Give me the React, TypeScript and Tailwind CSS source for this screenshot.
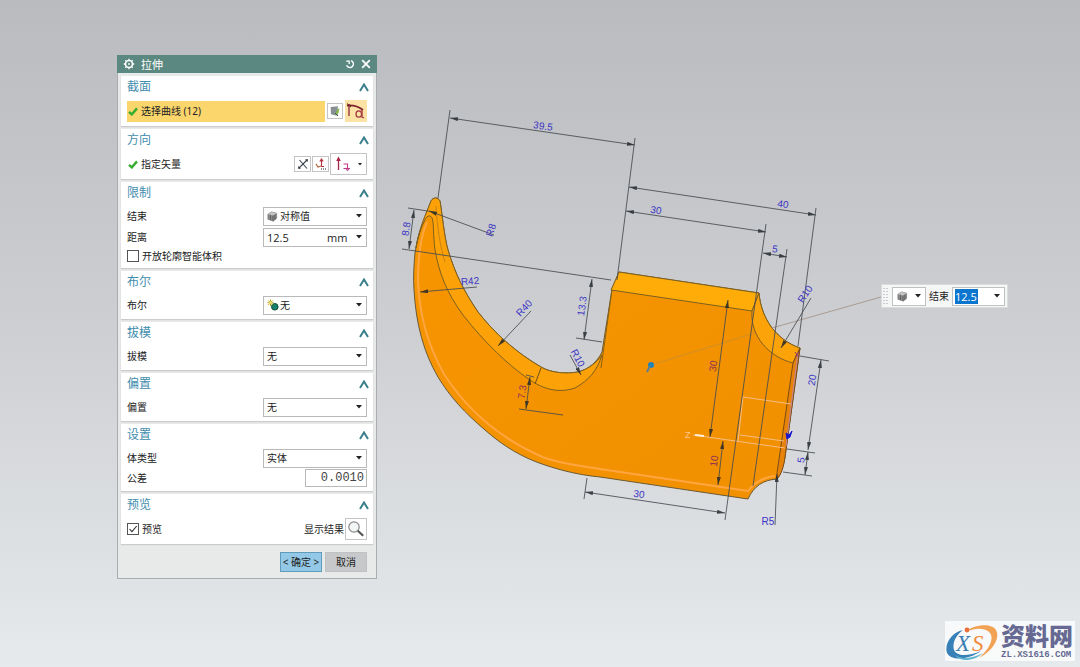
import { useId, useState } from "react";
import type { ReactNode } from "react";

type Point = [number, number];

interface Dimension {
  from: Point;
  to: Point;
  both?: boolean;
}

interface Label {
  text: string;
  at: Point;
  angle: number;
  tone?: string;
}

const dimensions: Dimension[] = [
  { from: [450, 118], to: [635, 145], both: true },
  { from: [629, 187], to: [816, 215], both: true },
  { from: [626, 211], to: [766, 232], both: true },
  { from: [763, 253], to: [787, 257], both: true },
  { from: [414, 210], to: [409, 249], both: true },
  { from: [592, 279], to: [584, 340], both: true },
  { from: [530, 377], to: [526, 409], both: true },
  { from: [728, 300], to: [710, 437], both: true },
  { from: [723, 441], to: [718, 485], both: true },
  { from: [821, 360], to: [808, 450], both: true },
  { from: [808, 452], to: [805, 475], both: true },
  { from: [585, 492], to: [725, 513], both: true },
  { from: [494, 235], to: [429, 211] },
  { from: [477, 287], to: [420, 292] },
  { from: [531, 311], to: [498, 346] },
  { from: [570, 355], to: [581, 375] },
  { from: [811, 298], to: [781, 348] },
  { from: [775, 525], to: [777, 474] },
];

const extensions: [Point, Point][] = [
  [[450, 110], [438, 198]],
  [[635, 138], [617, 280]],
  [[816, 208], [798, 346]],
  [[766, 224], [725, 520]],
  [[787, 249], [753, 486]],
  [[408, 208], [434, 212]],
  [[402, 249], [611, 280]],
  [[576, 338], [602, 342]],
  [[526, 375], [534, 377]],
  [[519, 409], [563, 415]],
  [[800, 356], [829, 361]],
  [[787, 449], [815, 453]],
  [[783, 472], [812, 476]],
  [[587, 478], [584, 499]],
];

const labels: Label[] = [
  { text: "39.5", at: [543, 126], angle: 8 },
  { text: "40", at: [783, 204], angle: 8 },
  { text: "30", at: [656, 210], angle: 8 },
  { text: "5", at: [775, 249], angle: 8 },
  { text: "R10", at: [805, 294], angle: -56 },
  { text: "8.8", at: [406, 229], angle: -82 },
  { text: "R8", at: [491, 230], angle: -72 },
  { text: "R42", at: [470, 281], angle: -5 },
  { text: "R40", at: [524, 308], angle: -46 },
  { text: "13.3", at: [582, 306], angle: -82 },
  { text: "R10", at: [578, 358], angle: 62 },
  { text: "7.3", at: [522, 392], angle: -82, tone: "fill-[#8a2f5a]" },
  { text: "30", at: [713, 366], angle: -82, tone: "fill-[#8a2f5a]" },
  { text: "10", at: [714, 461], angle: -82, tone: "fill-[#8a2f5a]" },
  { text: "20", at: [812, 380], angle: -82 },
  { text: "5", at: [801, 460], angle: -82 },
  { text: "30", at: [639, 494], angle: 8 },
  { text: "R5", at: [768, 521], angle: 0 },
];

function ModelView() {
  return (
    <svg
      viewBox="0 0 1080 667"
      preserveAspectRatio="xMidYMid slice"
      className="absolute inset-0 h-full w-full"
      role="img"
      aria-label="拉伸"
    >
      <defs>
        <marker id="arrow" viewBox="0 0 8 4" refX="8" refY="2" markerWidth="8" markerHeight="4" markerUnits="userSpaceOnUse" orient="auto-start-reverse">
          <path d="M0 0L8 2L0 4Z" fill="#20262b" />
        </marker>
        <linearGradient id="face" x1="0" y1="0" x2="1" y2="1">
          <stop offset="0" stopColor="#f79500" />
          <stop offset="1" stopColor="#f19000" />
        </linearGradient>
      </defs>

      <g strokeLinejoin="round">
        <path
          d="M431 201C433 197 438 197 440 201C442 212 444 236 448 250C455 273 463 290 478 312C495 334 517 353 541 367C551 373 566 374 578 372C589 369 597 362 602 352L612 289L619 272L759 293C761 318 776 340 800 348L785 457C783 468 780 476 777 479C763 480 754 486 748 499L600 477C580 475 563 471 545 465C523 458 503 446 485 430C465 413 450 397 438 377C424 353 416 325 414 290C413 278 414 264 415 253C418 232 425 217 431 201Z"
          fill="url(#face)"
          stroke="#6b5a36"
          strokeWidth="1"
        />
        <path
          d="M431 201C433 197 438 197 440 201C442 212 444 236 448 250C455 273 463 290 478 312C495 334 517 353 541 367C551 373 566 374 578 372C589 369 597 362 602 355C597 371 589 380 575 388C557 394 542 388 530 380C508 365 485 343 463 315C446 292 439 272 435 250C433 235 434 222 432 218C430 214 426 216 424 222C421 228 418 236 416 248C419 228 426 214 431 201Z"
          fill="#fca208"
          stroke="#7d6020"
          strokeWidth="1"
        />
        <path d="M619 272L759 293L752 311L611 290Z" fill="#ffab08" stroke="#7d6020" strokeWidth="1" />
        <path d="M759 293C761 318 776 340 800 348L793 363C769 357 750 336 752 311Z" fill="#fca30a" stroke="#7d6020" strokeWidth="1" />
        <path d="M800 348L793 363L777 473L777 479C781 475 784 466 785 457Z" fill="#e8830a" stroke="#7a4c16" strokeWidth="1" />
        <path d="M541 368L535 384" stroke="#6b5115" strokeWidth="1" fill="none" />
        <path d="M612 290L601 368" stroke="#8a6415" strokeWidth="1" fill="none" />
        <path
          d="M427 222C420 238 418 260 418 280C419 312 428 346 444 374C467 410 500 439 545 458C566 465 584 466 600 469L748 491C755 482 764 477 775 476"
          fill="none"
          stroke="#ffa640"
          strokeWidth="2"
        />
        <path d="M436 206C437 225 440 246 445 262" fill="none" stroke="#c98410" strokeWidth="1" />
      </g>

      <g fill="none" stroke="#f7bd83" strokeWidth="1">
        <path d="M791 404L743 397L738 441" />
        <path d="M740 435L784 441M693 435L785 448" />
        <path d="M798 352L786 446" stroke="#c58498" />
        <path d="M695 435L704 436" stroke="#fff0dc" strokeWidth="2" />
      </g>
      <text x="685" y="438" className="fill-[#ffc795] font-['Liberation_Sans'] text-[9px]">Z</text>

      <path d="M651 365L755 333" stroke="#b99042" strokeWidth="1" opacity="0.6" />
      <path d="M772 328L881 297" stroke="#a99c92" strokeWidth="1" />

      <g stroke="#464c51" strokeWidth="1" fill="none" opacity="0.85">
        {extensions.map(([a, b], i) => (
          <line key={i} x1={a[0]} y1={a[1]} x2={b[0]} y2={b[1]} />
        ))}
        {dimensions.map((d, i) => (
          <line
            key={i}
            x1={d.from[0]}
            y1={d.from[1]}
            x2={d.to[0]}
            y2={d.to[1]}
            markerEnd="url(#arrow)"
            markerStart={d.both ? "url(#arrow)" : undefined}
          />
        ))}
      </g>

      {labels.map((l, i) => (
        <text
          key={i}
          textAnchor="middle"
          dominantBaseline="central"
          transform={`translate(${l.at[0]} ${l.at[1]}) rotate(${l.angle})`}
          className={`font-['Liberation_Sans_Narrow','Liberation_Sans',sans-serif] text-[10px] ${l.tone ?? "fill-[#3b35c4]"}`}
        >
          {l.text}
        </text>
      ))}

      <circle cx="651" cy="365" r="3" fill="#1d83b8" />
      <path d="M650 366L647 372" stroke="#5a8193" strokeWidth="2" />
      <path d="M786 433L789 435L792 431L790 437L787 439Z" fill="#1818d0" stroke="#1818d0" strokeWidth="1" />
      <path d="M795 352L799 357M799 352L795 357" stroke="#8d3a5c" strokeWidth="1" />
    </svg>
  );
}

function Caret() {
  return (
    <svg viewBox="0 0 6 4" className="pointer-events-none h-1 w-1.5" aria-hidden="true">
      <path d="M0 0H6L3 3.6Z" fill="#222" />
    </svg>
  );
}

function CubeIcon() {
  return (
    <svg viewBox="0 0 12 12" className="h-[11px] w-[11px]" aria-hidden="true">
      <path d="M1 3.5L5 1L10.5 2.5V8L7 11L1 9Z" fill="#8c8c8c" stroke="#777" strokeWidth="0.8" />
      <path d="M1 3.5L6.5 5L10.5 2.5L5 1Z" fill="#c4c4c4" />
      <path d="M6.5 5V11M3.7 4.2V9.9M8.6 4V9.5" stroke="#555" strokeWidth="0.9" />
    </svg>
  );
}

function BooleanIcon() {
  return (
    <svg viewBox="0 0 12 12" className="h-3 w-3" aria-hidden="true">
      <circle cx="7.8" cy="7.8" r="3.3" fill="#16806a" stroke="#14503f" />
      <path d="M3.5 0.5V7M0.5 3.7H6.8M1.3 1.5L5.7 6M5.7 1.5L1.3 6" stroke="#b5a51e" strokeWidth="1" />
      <circle cx="3.5" cy="3.7" r="1.3" fill="#f4e36e" />
    </svg>
  );
}

function CheckMark() {
  return (
    <svg viewBox="0 0 10 9" className="h-[9px] w-[10px] shrink-0" aria-hidden="true">
      <path d="M1 4.8L3.8 7.4L9 1.4" fill="none" stroke="#35ad2e" strokeWidth="2.4" />
    </svg>
  );
}

function Section({ title, children }: { title: string; children: ReactNode }) {
  const [open, setOpen] = useState(true);
  return (
    <section className="bg-white pr-1.5 pb-1 pl-1.5 shadow-[0_1px_1px_#c9cbcc]">
      <h2>
        <button
          type="button"
          aria-expanded={open}
          onClick={() => setOpen(!open)}
          className="flex h-[22px] w-full items-center justify-between text-[12px] leading-none text-[#3f8dad]"
        >
          {title}
          <svg viewBox="0 0 10 9" className={open ? "-mr-0.5 h-[9px] w-[10px]" : "-mr-0.5 h-[9px] w-[10px] rotate-180"} aria-hidden="true">
            <path d="M1 8L5 1.5L9 8" fill="none" stroke="#3b7f8c" strokeWidth="2" />
          </svg>
        </button>
      </h2>
      {open && <div className="flex flex-col gap-px pt-0.5">{children}</div>}
    </section>
  );
}

function Choice({ label, options, icon }: { label: string; options: string[]; icon?: ReactNode }) {
  const id = useId();
  return (
    <div className="flex h-5 items-center justify-between">
      <label htmlFor={id}>{label}</label>
      <div className="relative flex h-[19px] w-[104px] items-center border border-[#b9b9b9] bg-white">
        {icon && <span className="pointer-events-none absolute left-[3px]">{icon}</span>}
        <select
          id={id}
          className={
            icon
              ? "h-full w-full appearance-none bg-transparent pl-4 outline-none"
              : "h-full w-full appearance-none bg-transparent pl-[3px] outline-none"
          }
        >
          {options.map((o) => (
            <option key={o}>{o}</option>
          ))}
        </select>
        <span className="pointer-events-none absolute right-1 flex">
          <Caret />
        </span>
      </div>
    </div>
  );
}

function CheckBox({ label, initial }: { label: string; initial: boolean }) {
  const [checked, setChecked] = useState(initial);
  return (
    <label className="flex items-center gap-[3px]">
      <span className="relative flex h-3 w-3">
        <input
          type="checkbox"
          checked={checked}
          onChange={(e) => setChecked(e.target.checked)}
          className="h-3 w-3 appearance-none border border-[#555] bg-white"
        />
        {checked && (
          <svg viewBox="0 0 12 12" className="pointer-events-none absolute inset-0 h-3 w-3" aria-hidden="true">
            <path d="M2.5 6L5 8.7L9.7 3" fill="none" stroke="#333" strokeWidth="1.1" />
          </svg>
        )}
      </span>
      {label}
    </label>
  );
}

function ExtrudeDialog() {
  return (
    <form
      onSubmit={(e) => e.preventDefault()}
      className="absolute top-[55px] left-[117px] w-[260px] border border-[#a9adb0] bg-[#e8e9e9] text-[10px] leading-none text-[#222]"
    >
      <header className="-mx-px -mt-px flex h-[18px] items-center bg-[#5b8981] px-1.5 text-white">
        <svg viewBox="0 0 12 12" className="h-3 w-3" aria-hidden="true">
          <circle cx="6" cy="6" r="3.5" fill="none" stroke="#fff" strokeWidth="1.6" />
          <path d="M6 0.8V2.5M6 9.5V11.2M0.8 6H2.5M9.5 6H11.2M2.3 2.3L3.4 3.4M8.6 8.6L9.7 9.7M9.7 2.3L8.6 3.4M3.4 8.6L2.3 9.7" stroke="#fff" strokeWidth="1.3" />
          <circle cx="6" cy="6" r="0.9" fill="#fff" />
        </svg>
        <h1 className="ml-1.5 flex-1 text-[11px]">拉伸</h1>
        <button type="button" aria-label="重置" className="mr-1.5">
          <svg viewBox="0 0 10 10" className="h-[10px] w-[10px]">
            <path d="M6 1.7A3.5 3.5 0 1 1 1.6 6.2" fill="none" stroke="#fff" strokeWidth="1.4" />
            <path d="M1.2 2.2H4.2V5" fill="none" stroke="#fff" strokeWidth="1.3" />
          </svg>
        </button>
        <button type="button" aria-label="关闭">
          <svg viewBox="0 0 10 10" className="h-[10px] w-[10px]">
            <path d="M1.2 1.2L8.8 8.8M8.8 1.2L1.2 8.8" stroke="#fff" strokeWidth="1.8" />
          </svg>
        </button>
      </header>

      <div className="flex flex-col gap-[3px] px-[3px] pt-[3px]">
        <Section title="截面">
          <div className="flex h-[22px] items-center gap-0.5">
            <button type="button" className="flex h-[21px] flex-1 items-center gap-[3px] bg-[#fad66c] pl-px">
              <CheckMark />
              选择曲线 (12)
            </button>
            <button type="button" aria-label="绘制截面" className="flex h-4 w-4 items-center justify-center border border-[#c4c4c4] bg-white">
              <svg viewBox="0 0 12 12" className="h-3 w-3">
                <path d="M1.5 2L9 1V11L2 9.5Z" fill="#a6adb0" />
                <path d="M3 2V9M5 2V10M7 2V10" stroke="#687278" />
                <path d="M6 10.5L8 5L10.5 3L9.5 8Z" fill="#84b94b" />
                <path d="M6 8L9 11" stroke="#415c42" />
              </svg>
            </button>
            <button type="button" aria-label="曲线" className="flex h-[22px] w-[22px] items-center justify-center bg-[#fbe3a6]">
              <svg viewBox="0 0 20 20" className="h-5 w-5">
                <path d="M3 3V15" fill="none" stroke="#8e2635" strokeWidth="1.3" />
                <path d="M1 4.5C7 4 12 5 17 9" fill="none" stroke="#7d2430" strokeWidth="1.8" />
                <path d="M1 2.5L5 6" stroke="#5e1d26" />
                <ellipse cx="12.8" cy="13" rx="2.8" ry="3.2" fill="none" stroke="#a53b43" strokeWidth="1.3" />
                <path d="M16 9V16L18 17" fill="none" stroke="#a53b43" strokeWidth="1.3" />
              </svg>
            </button>
          </div>
        </Section>

        <Section title="方向">
          <div className="flex h-[22px] items-center">
            <span className="flex flex-1 items-center gap-[3px] pl-px">
              <CheckMark />
              指定矢量
            </span>
            <button type="button" aria-label="反向" className="flex h-4 w-[17px] items-center justify-center border border-[#c4c4c4] bg-white">
              <svg viewBox="0 0 12 12" className="h-3 w-3">
                <path d="M1.5 10.5L10.5 1.5M2.5 2L10 10.5" stroke="#3a444c" strokeWidth="1.1" />
                <path d="M8 1.5L10.8 1.2L10.5 4ZM1.2 8L1.5 10.8L4 10.5Z" fill="#28313a" />
              </svg>
            </button>
            <button type="button" aria-label="矢量对话框" className="ml-px flex h-4 w-[17px] items-center justify-center border border-[#c4c4c4] bg-white">
              <svg viewBox="0 0 12 12" className="h-3 w-3">
                <path d="M6.5 8.5V1.5M4.8 3.5L6.5 1L8.2 3.5M6.5 8.5H9" fill="none" stroke="#b82d3b" strokeWidth="1.1" />
                <path d="M1 6L3 9L6 8" fill="none" stroke="#b0653a" strokeWidth="1.3" />
                <path d="M6 11H7M8 11H9M10 11H11" stroke="#222" strokeWidth="1.2" />
              </svg>
            </button>
            <button type="button" aria-label="矢量" className="ml-px flex h-[22px] w-[37px] items-center justify-between border border-[#c4c4c4] bg-white px-1">
              <svg viewBox="0 0 16 16" className="h-4 w-4">
                <path d="M3.5 14V2" stroke="#a82747" strokeWidth="1.3" />
                <path d="M1.2 5L3.5 0.5L5.8 5Z" fill="#a82747" />
                <path d="M8.5 8H12.5V13M10.5 12L12.5 14.5L14.8 12M8.5 12.5H15" fill="none" stroke="#c03c87" strokeWidth="1.1" />
              </svg>
              <svg viewBox="0 0 4 3" className="h-[3px] w-1" aria-hidden="true">
                <path d="M0 0H4L2 2.5Z" fill="#222" />
              </svg>
            </button>
          </div>
        </Section>

        <Section title="限制">
          <Choice label="结束" options={["对称值", "值", "贯通"]} icon={<CubeIcon />} />
          <div className="flex h-5 items-center justify-between">
            <label htmlFor="distance">距离</label>
            <div className="relative flex h-[19px] w-[104px] items-center border border-[#b9b9b9] bg-white">
              <input id="distance" defaultValue="12.5" className="h-full w-[60px] pl-[3px] font-['Open_Sans',sans-serif] text-[11px] outline-none" />
              <select aria-label="单位" className="h-full flex-1 appearance-none bg-transparent pl-[3px] font-['Open_Sans',sans-serif] text-[11px] outline-none">
                <option>mm</option>
                <option>in</option>
              </select>
              <span className="pointer-events-none absolute right-1 flex">
                <Caret />
              </span>
            </div>
          </div>
          <div className="flex h-4 items-center">
            <CheckBox label="开放轮廓智能体积" initial={false} />
          </div>
        </Section>

        <Section title="布尔">
          <Choice label="布尔" options={["无", "求和", "求差"]} icon={<BooleanIcon />} />
        </Section>

        <Section title="拔模">
          <Choice label="拔模" options={["无", "从起始限制"]} />
        </Section>

        <Section title="偏置">
          <Choice label="偏置" options={["无", "单侧", "两侧"]} />
        </Section>

        <Section title="设置">
          <Choice label="体类型" options={["实体", "片体"]} />
          <div className="flex h-[18px] items-center justify-between">
            <label htmlFor="tolerance">公差</label>
            <input
              id="tolerance"
              defaultValue="0.0010"
              className="h-[18px] w-[62px] border border-[#b9b9b9] bg-white pr-0.5 text-right font-['Liberation_Mono',monospace] text-[12px] text-[#444] outline-none"
            />
          </div>
        </Section>

        <Section title="预览">
          <div className="flex h-[22px] items-center justify-between">
            <CheckBox label="预览" initial={true} />
            <button type="button" className="flex items-center gap-px">
              显示结果
              <span className="flex h-[22px] w-[22px] items-center justify-center border border-[#c4c4c4] bg-white">
                <svg viewBox="0 0 18 18" className="h-[18px] w-[18px]" aria-hidden="true">
                  <circle cx="7" cy="7" r="5.2" fill="#f3f6f7" stroke="#888" strokeWidth="1.2" />
                  <path d="M10.8 10.8L16.2 15.8" stroke="#555" strokeWidth="2.2" />
                </svg>
              </span>
            </button>
          </div>
        </Section>
      </div>

      <footer className="flex justify-end gap-[3px] pt-2 pr-[9px] pb-1.5">
        <button type="submit" className="h-5 w-[42px] border border-[#5f9cbb] bg-[#93c9e6] whitespace-nowrap">
          &lt; 确定 &gt;
        </button>
        <button type="button" className="h-5 w-[42px] border border-[#c0c1c3] bg-[#c6c8ca]">
          取消
        </button>
      </footer>
    </form>
  );
}

function ValueToolbar() {
  return (
    <div className="absolute top-[284px] left-[881px] flex h-6 items-center border border-[#d9dbdc] bg-[#f5f6f6] pr-0.5 pl-px text-[10px] leading-none text-[#222]">
      <svg viewBox="0 0 5 18" className="mr-1 h-[18px] w-[5px]" aria-hidden="true">
        <path d="M1 1V18M4 1V18" stroke="#9aa0a4" strokeDasharray="1 2" />
      </svg>
      <button type="button" aria-label="限制类型" className="flex h-[19px] w-[34px] items-center justify-between border border-[#bfc1c3] bg-white px-1">
        <CubeIcon />
        <Caret />
      </button>
      <label htmlFor="end-value" className="mx-[3px]">
        结束
      </label>
      <div className="flex h-[19px] w-[53px] items-center justify-between border border-[#bfc1c3] bg-white pr-1 pl-0.5">
        <input
          id="end-value"
          defaultValue="12.5"
          className="h-[15px] w-[23px] bg-[#0c76cf] font-['Open_Sans',sans-serif] text-[11px] text-white outline-none"
        />
        <button type="button" aria-label="展开">
          <Caret />
        </button>
      </div>
    </div>
  );
}

function SiteMark() {
  return (
    <aside className="absolute right-[5px] bottom-1.5 flex h-10 items-end gap-0.5 bg-white/75 pr-0.5 text-[#666a93]">
      <svg viewBox="0 0 54 38" className="h-[38px] w-[54px]" aria-hidden="true">
        <path d="M18 7C7 9 -1 21 2 30C7 39 25 36 36 28C24 33 12 34 9 27C7 20 11 12 18 7Z" fill="#3780b8" />
        <path d="M20 9C28 2 46 -1 51 7C56 16 46 29 34 35C42 28 50 17 45 10C40 4 29 5 20 9Z" fill="#f2a254" />
        <path d="M10 32C17 37 29 35 38 30C30 38 15 40 10 32Z" fill="#63b4d1" />
        <circle cx="22" cy="7" r="2.4" fill="#e8703a" />
        <text x="11" y="28" fill="#3c7eb4" className="font-['Liberation_Serif',serif] text-[23px] italic">X</text>
        <text x="27" y="28" fill="#f08a3c" className="font-['Liberation_Serif',serif] text-[23px] italic">S</text>
      </svg>
      <div>
        <p className="text-[24px] leading-[26px] font-black">资料网</p>
        <p className="font-['Liberation_Mono',monospace] text-[9px] leading-3 font-bold">ZL.XS1616.COM</p>
      </div>
    </aside>
  );
}

export default function App() {
  return (
    <main className="relative min-h-screen overflow-hidden bg-linear-to-b from-[#b9bbbe] via-[#cecfd2] to-[#e6eaed] font-['Noto_Sans','Noto_Sans_CJK_SC',sans-serif]">
      <ModelView />
      <ExtrudeDialog />
      <ValueToolbar />
      <SiteMark />
    </main>
  );
}
